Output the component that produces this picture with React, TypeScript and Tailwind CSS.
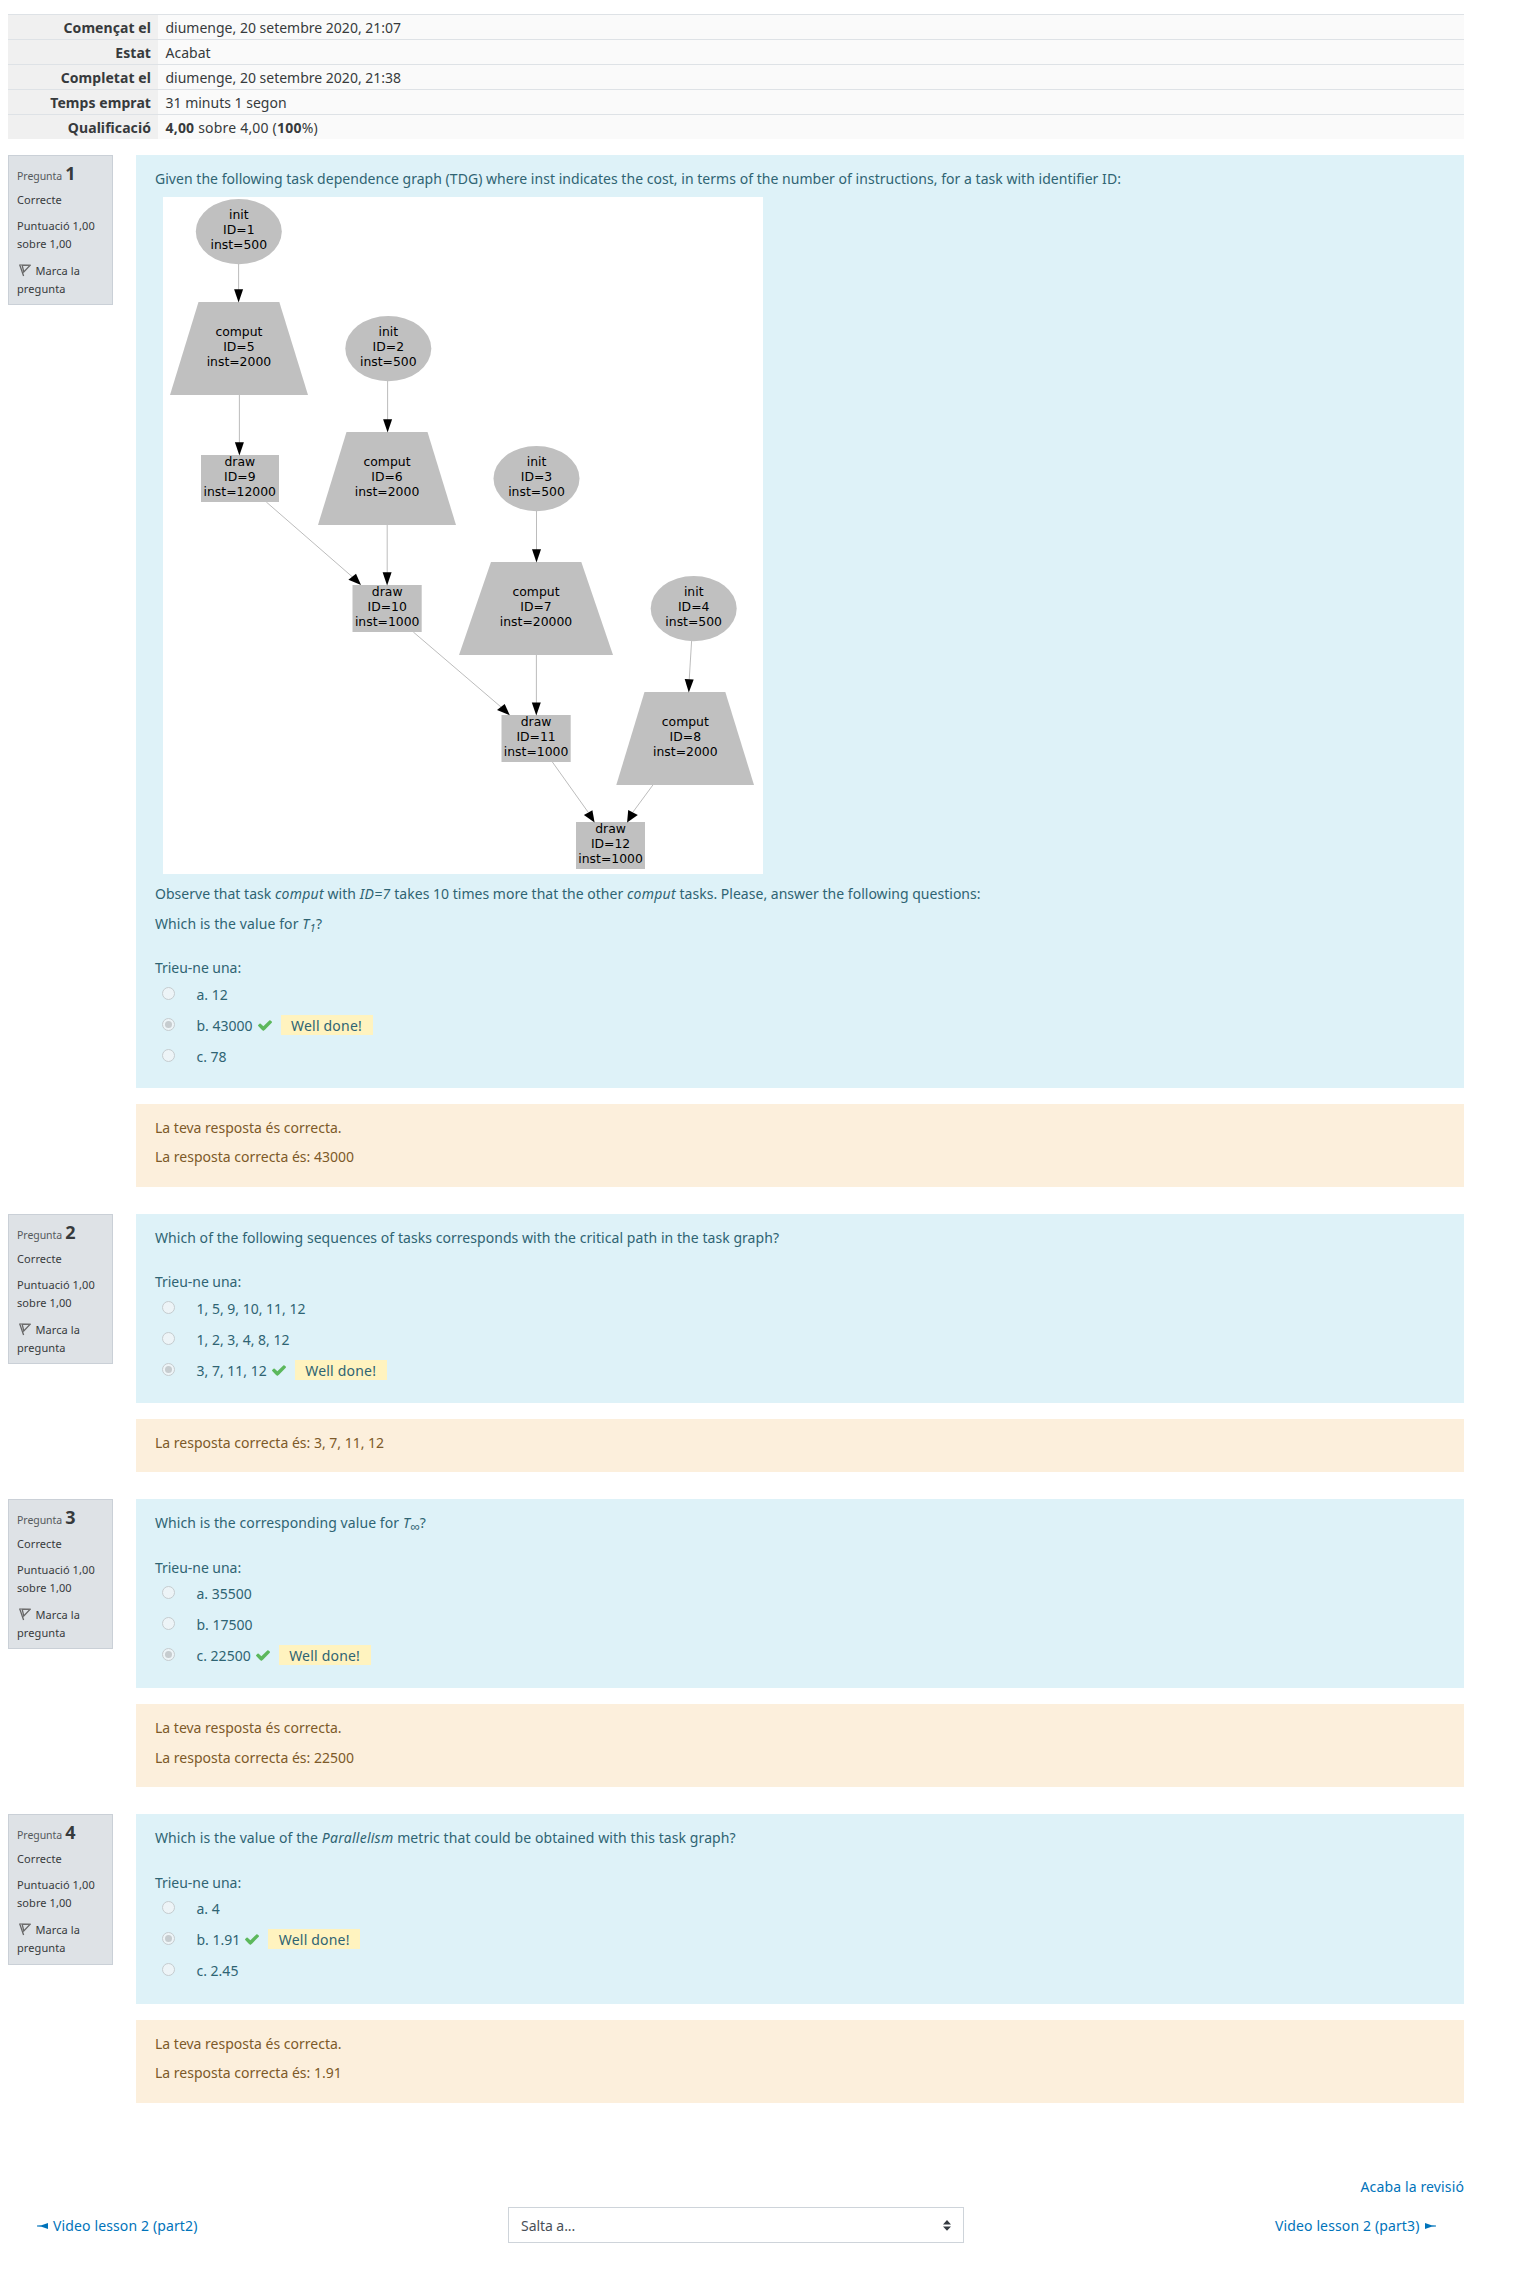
import type { ReactNode } from "react";

const summary: [string, ReactNode][] = [
  ["Començat el", "diumenge, 20 setembre 2020, 21:07"],
  ["Estat", "Acabat"],
  ["Completat el", "diumenge, 20 setembre 2020, 21:38"],
  ["Temps emprat", "31 minuts 1 segon"],
  [
    "Qualificació",
    <span className="tracking-[0.2px]">
      <b>4,00</b> sobre 4,00 (<b>100</b>%)
    </span>,
  ],
];

/* ---------- Icons ---------- */

function FlagIcon() {
  return (
    <svg width="12" height="13" viewBox="0 0 12 13" className="ml-[2px] mr-[4.5px] inline-block align-[-2px]">
      <path d="M0.7 0.7 L4.6 12 M3.2 1.4 L4.8 8 L11 1.4 Z" fill="none" stroke="#666" strokeWidth="1.3" />
      <path d="M0.3 0.9 L11.4 1.2" fill="none" stroke="#777" strokeWidth="0.9" />
    </svg>
  );
}

function CheckIcon() {
  return (
    <svg width="14" height="11" viewBox="121 334 1550 1188" className="ml-[5px] mr-[9px] mt-[10px] shrink-0">
      <path
        d="M1671 566q0 40-28 68l-724 724-136 136q-28 28-68 28t-68-28l-136-136-362-362q-28-28-28-68t28-68l136-136q28-28 68-28t68 28l294 295 656-657q28-28 68-28t68 28l136 136q28 28 28 68z"
        fill="#5cb85c"
      />
    </svg>
  );
}

function Radio({ checked }: { checked?: boolean }) {
  return (
    <span className="mt-2 flex size-[13px] shrink-0 items-center justify-center rounded-full border border-[#c5cccf] bg-[#edf4f7]">
      {checked && <span className="size-[7px] rounded-full bg-[#c6cccf]" />}
    </span>
  );
}

/* ---------- Task graph ---------- */

type GraphNode = {
  kind: "init" | "comput" | "draw";
  id: number;
  inst: number;
  cx: number;
  baseline: number;
  points?: string;
};

const nodes: GraphNode[] = [
  { kind: "init", id: 1, inst: 500, cx: 238.8, baseline: 219 },
  { kind: "init", id: 2, inst: 500, cx: 388.3, baseline: 336 },
  { kind: "init", id: 3, inst: 500, cx: 536.5, baseline: 466 },
  { kind: "init", id: 4, inst: 500, cx: 693.7, baseline: 596 },
  { kind: "comput", id: 5, inst: 2000, cx: 238.9, baseline: 336, points: "198.5,302 279.3,302 308,395 170,395" },
  { kind: "comput", id: 6, inst: 2000, cx: 387, baseline: 466, points: "346.5,432 427.5,432 456,525 318,525" },
  { kind: "comput", id: 7, inst: 20000, cx: 536, baseline: 596, points: "491,562 581.3,562 613,655 459,655" },
  { kind: "comput", id: 8, inst: 2000, cx: 685.3, baseline: 726, points: "644.5,692 725.3,692 754,785 616.3,785" },
  { kind: "draw", id: 9, inst: 12000, cx: 239.8, baseline: 466, points: "201,455 279,455 279,502 201,502" },
  { kind: "draw", id: 10, inst: 1000, cx: 387.2, baseline: 596, points: "352.5,585 421.7,585 421.7,632 352.5,632" },
  { kind: "draw", id: 11, inst: 1000, cx: 536.1, baseline: 726, points: "501.5,715 570.7,715 570.7,762 501.5,762" },
  { kind: "draw", id: 12, inst: 1000, cx: 610.6, baseline: 833, points: "576,822 645,822 645,869 576,869" },
];

const edges = [
  { line: "M238.6 264V290", head: "234.1,289.3 243.1,289.3 238.6,302.5" },
  { line: "M239.4 395V443", head: "234.9,442.3 243.9,442.3 239.4,455.5" },
  { line: "M387.6 381V420", head: "383.1,419.3 392.1,419.3 387.6,432.5" },
  { line: "M387.2 525V573", head: "382.6,572.3 391.6,572.3 387.1,585.5" },
  { line: "M536.5 511V550", head: "532,549.3 541,549.3 536.5,562.5" },
  { line: "M536.4 655V703", head: "531.8,702.5 540.8,702.5 536.3,715.5" },
  { line: "M266.3 502L352.5 577", head: "348.4,579.7 356,573.7 361,585" },
  { line: "M413.3 632L501 707", head: "497,710 504.7,704 509.8,715.2" },
  { line: "M691.6 641L689.2 680", head: "684.7,679 693.7,679.4 688.8,692.5" },
  { line: "M552.4 762L588 812", head: "583.9,815 592.4,810.3 594.6,822.5" },
  { line: "M652.9 785L633 812", head: "628.2,810 637.8,815 627.1,822.5" },
];

function TaskGraph() {
  return (
    <svg width="600" height="677" viewBox="163 197 600 677" className="ml-2 mt-[7px] block bg-white">
      {edges.map((e) => (
        <path key={e.line} d={e.line} stroke="#b4b4b4" strokeWidth="0.9" fill="none" />
      ))}
      {nodes.map((n) => (
        <g key={n.id}>
          {n.kind === "init" ? (
            <ellipse cx={n.cx} cy={n.baseline + 12.6} rx="43" ry="32.7" fill="#c0c0c0" />
          ) : (
            <polygon points={n.points} fill="#c0c0c0" />
          )}
          <g fontFamily="'DejaVu Sans', sans-serif" fontSize="12.4" textAnchor="middle" fill="#000">
            <text x={n.cx} y={n.baseline}>{n.kind}</text>
            <text x={n.cx} y={n.baseline + 15}>{`ID=${n.id}`}</text>
            <text x={n.cx} y={n.baseline + 30}>{`inst=${n.inst}`}</text>
          </g>
        </g>
      ))}
      {edges.map((e) => (
        <polygon key={e.head} points={e.head} fill="#000" />
      ))}
    </svg>
  );
}

/* ---------- Question blocks ---------- */

type QuestionProps = {
  number: number;
  infoClass?: string;
  panelClass: string;
  chooseClass?: string;
  feedbackClass: string;
  options: string[];
  selected: number;
  feedback: string[];
  children: ReactNode;
};

function InfoBox({ number, className = "h-[150px]" }: { number: number; className?: string }) {
  return (
    <aside
      className={`w-[105px] shrink-0 border border-[#cad0d7] bg-[#dee2e6] px-2 pt-2 text-[11px] leading-[18px] tracking-[0.08px] text-[#373a3c] ${className}`}
    >
      <h3 className="flex h-[21px] items-baseline gap-[3px] whitespace-nowrap">
        <span className="text-[10.5px] tracking-[-0.05px] text-[#55595c]">Pregunta</span>
        <span className="text-[18px] font-bold tracking-normal">{number}</span>
      </h3>
      <p className="mt-[6px]">Correcte</p>
      <p className="mt-2">
        Puntuació 1,00
        <br />
        sobre 1,00
      </p>
      <p className="mt-[9px]">
        <FlagIcon />
        Marca la
        <br />
        pregunta
      </p>
    </aside>
  );
}

function Question(q: QuestionProps) {
  return (
    <section className="mb-[27px] flex items-start gap-[23px]">
      <InfoBox number={q.number} className={q.infoClass} />
      <div className="flex-1">
        <div className={`bg-[#def2f8] pl-[19px] pt-[13px] text-[#2f6473] ${q.panelClass}`}>
          {q.children}
          <p className={`tracking-[-0.04px] ${q.chooseClass ?? "mt-[22px]"}`}>Trieu-ne una:</p>
          <ul>
            {q.options.map((option, i) => (
              <li key={option} className="flex h-[31px] items-start pl-[7px]">
                <Radio checked={i === q.selected} />
                <span className="ml-[21.5px] mt-[5px] whitespace-nowrap">{option}</span>
                {i === q.selected && (
                  <>
                    <CheckIcon />
                    <span className="mt-[5px] h-5 w-[92px] bg-[#fff3bf] pl-[10.5px] leading-[22px] tracking-[0.2px]">
                      Well done!
                    </span>
                  </>
                )}
              </li>
            ))}
          </ul>
        </div>
        <div className={`mt-4 flex flex-col bg-[#fcefdc] pl-[19px] pt-[13px] text-[#7d5a29] ${q.feedbackClass}`}>
          {q.feedback.map((line) => (
            <p key={line}>{line}</p>
          ))}
        </div>
      </div>
    </section>
  );
}

export default function App() {
  return (
    <div className="h-[2273px] w-[1514px] bg-white pl-2 pr-[50px] pt-[14px] font-['Noto_Sans',sans-serif] text-[14px] leading-[22px] text-[#373a3c]">
      <table className="w-full border-separate border-spacing-0">
        <tbody>
          {summary.map(([label, value]) => (
            <tr key={label}>
              <th className="w-[150px] border-t border-[#dee2e6] bg-[#f0f0f0] p-0 pr-[7px] pt-[2px] text-right font-bold tracking-[0.07px]">
                {label}
              </th>
              <td className="border-t border-[#dee2e6] bg-[#fafafa] p-0 pl-[7.5px] pt-[2px]">{value}</td>
            </tr>
          ))}
        </tbody>
      </table>

      <main className="mt-4">
        <Question
          number={1}
          panelClass="h-[933px]"
          feedbackClass="h-[83px] gap-[7px]"
          options={["a. 12", "b. 43000", "c. 78"]}
          selected={1}
          feedback={["La teva resposta és correcta.", "La resposta correcta és: 43000"]}
        >
          <p className="tracking-[0.033px]">
            Given the following task dependence graph (TDG) where inst indicates the cost, in terms of the number of
            instructions, for a task with identifier ID:
          </p>
          <TaskGraph />
          <p className="mt-[9px] tracking-[0.02px]">
            Observe that task <i className="tracking-[0.27px]">comput</i> with{" "}
            <i className="tracking-[0.35px]">ID=7</i> takes 10 times more that the other{" "}
            <i className="tracking-[0.27px]">comput</i> tasks. Please, answer the following questions:
          </p>
          <p className="mt-2 h-[22px] tracking-[0.1px]">
            Which is the value for{" "}
            <i className="tracking-[0.5px]">
              T<sub className="text-[10.5px]">1</sub>
            </i>
            ?
          </p>
        </Question>

        <Question
          number={2}
          panelClass="h-[189px]"
          feedbackClass="h-[53px]"
          options={["1, 5, 9, 10, 11, 12", "1, 2, 3, 4, 8, 12", "3, 7, 11, 12"]}
          selected={2}
          feedback={["La resposta correcta és: 3, 7, 11, 12"]}
        >
          <p className="tracking-[0.053px]">
            Which of the following sequences of tasks corresponds with the critical path in the task graph?
          </p>
        </Question>

        <Question
          number={3}
          panelClass="h-[189px]"
          chooseClass="mt-[23px] h-[21px]"
          feedbackClass="h-[83px] gap-2"
          options={["a. 35500", "b. 17500", "c. 22500"]}
          selected={2}
          feedback={["La teva resposta és correcta.", "La resposta correcta és: 22500"]}
        >
          <p className="h-[22px] tracking-[0.08px]">
            Which is the corresponding value for <i className="tracking-[0.5px]">T</i>
            <sub className="text-[13px]">∞</sub>?
          </p>
        </Question>

        <Question
          number={4}
          infoClass="h-[151px]"
          panelClass="h-[190px]"
          chooseClass="mt-[23px] h-[21px]"
          feedbackClass="h-[83px] gap-[7px]"
          options={["a. 4", "b. 1.91", "c. 2.45"]}
          selected={1}
          feedback={["La teva resposta és correcta.", "La resposta correcta és: 1.91"]}
        >
          <p className="tracking-[0.09px]">
            Which is the value of the <i className="tracking-[0.25px]">Parallelism</i> metric that could be obtained
            with this task graph?
          </p>
        </Question>
      </main>

      <footer className="mt-[73px] text-[#0073ba]">
        <a className="ml-auto block h-[31px] w-max tracking-[0.13px]">Acaba la revisió</a>
        <nav className="flex h-9 items-center tracking-[0.13px]">
          <a className="flex w-[500px] items-center gap-[5px] pl-[29px] pt-[2px]">
            <svg width="11" height="6" viewBox="0 0 11 6">
              <path d="M0 2.5 L4.5 2.3 L11 0 V6 L4.5 3.7 L0 3.5 Z" fill="currentColor" />
            </svg>
            Video lesson 2 (part2)
          </a>
          <div className="flex h-9 w-[456px] items-center justify-between border border-[#ced4da] bg-white pl-3 pr-3 tracking-[-0.06px] text-[#495057]">
            <span className="pt-[2px]">Salta a...</span>
            <svg width="8" height="11" viewBox="0 0 8 11">
              <path d="M0 4.4 L4 0 L8 4.4 Z M0 6.4 H8 L4 10.8 Z" fill="#343a40" />
            </svg>
          </div>
          <a className="ml-auto mr-[28.5px] flex items-center gap-[5px] pt-[2px]">
            Video lesson 2 (part3)
            <svg width="11" height="6" viewBox="0 0 11 6">
              <path d="M11 2.5 L6.5 2.3 L0 0 V6 L6.5 3.7 L11 3.5 Z" fill="currentColor" />
            </svg>
          </a>
        </nav>
      </footer>
    </div>
  );
}
